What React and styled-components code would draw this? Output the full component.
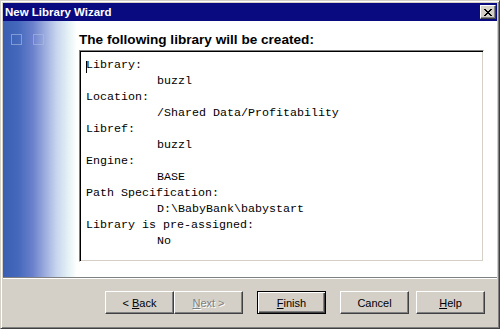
import React from "react";
import styled, { createGlobalStyle } from "styled-components";

const Global = createGlobalStyle`
  html, body { margin: 0; padding: 0; background: #d4d0c8; }
  * { box-sizing: border-box; }
`;

const Frame = styled.div`
  width: 500px;
  height: 329px;
  background: #d4d0c8;
  border-top: 1px solid #d4d0c8;
  border-left: 1px solid #d4d0c8;
  border-right: 1px solid #404040;
  border-bottom: 1px solid #404040;
  box-shadow: inset 1px 1px #ffffff, inset -1px -1px #808080;
  padding: 2px;
  display: flex;
  flex-direction: column;
`;

const TitleBar = styled.div`
  height: 18px;
  background: #0a0a80;
  display: flex;
  align-items: center;
  justify-content: space-between;
  padding: 0 1px 0 2px;
`;

const Title = styled.span`
  font-family: "Liberation Sans", Arial, sans-serif;
  font-weight: bold;
  font-size: 11.5px;
  color: #ffffff;
  line-height: 18px;
`;

const CloseButton = styled.div`
  width: 16px;
  height: 14px;
  background: #d4d0c8;
  border-top: 1px solid #ffffff;
  border-left: 1px solid #ffffff;
  border-right: 1px solid #404040;
  border-bottom: 1px solid #404040;
  box-shadow: inset -1px -1px #808080;
  display: flex;
  align-items: center;
  justify-content: center;
`;

const Body = styled.div`
  height: 256px;
  background: #ffffff;
  display: flex;
`;

const SidePanel = styled.div`
  width: 74px;
  flex: none;
  background: linear-gradient(
    to right,
    #3a5fb2 0%,
    #4468bb 20%,
    #6a80cc 40%,
    #9aaadc 56%,
    #c6d4ee 72%,
    #e4f1f5 88%,
    #ffffff 100%
  );
  display: flex;
  align-items: flex-start;
  gap: 11px;
  padding: 13px 0 0 8px;
`;

const Square = styled.div`
  width: 11px;
  height: 11px;
  border: 1px solid rgba(170, 188, 228, 0.6);
`;

const Content = styled.div`
  flex: 1;
  padding: 11px 12px 0 2px;
  display: flex;
  flex-direction: column;
  gap: 2px;
`;

const Heading = styled.div`
  font-family: "Liberation Sans", Arial, sans-serif;
  font-weight: bold;
  font-size: 13.6px;
  line-height: 16px;
  color: #000;
`;

const TextBox = styled.div`
  position: relative;
  width: 405px;
  height: 212px;
  background: #fff;
  border-top: 1px solid #808080;
  border-left: 1px solid #808080;
  border-right: 1px solid #ffffff;
  border-bottom: 1px solid #ffffff;
  box-shadow: inset 1px 1px #000000, inset -1px -1px #d4d0c8;
  padding: 6px 0 0 6px;
  font-family: "Liberation Mono", "Courier New", monospace;
  font-size: 11.67px;
  line-height: 16px;
  color: #000;
`;

const Caret = styled.span`
  position: absolute;
  left: 6px;
  top: 10px;
  width: 1px;
  height: 12px;
  background: #000;
`;

const Line = styled.div`
  white-space: pre;
  padding-left: ${(p) => (p.$indent ? "71px" : "0")};
`;

const Separator = styled.div`
  height: 2px;
  border-top: 1px solid #808080;
  border-bottom: 1px solid #ffffff;
`;

const ButtonBar = styled.div`
  flex: 1;
  display: flex;
  justify-content: flex-end;
  align-items: flex-start;
  padding: 12px 12px 0 0;
`;

const Button = styled.div`
  width: 69px;
  height: 23px;
  margin-left: ${(p) => p.$gap || 0}px;
  background: #d4d0c8;
  border-top: 1px solid ${(p) => (p.$default ? "#000" : "#ffffff")};
  border-left: 1px solid ${(p) => (p.$default ? "#000" : "#ffffff")};
  border-right: 1px solid ${(p) => (p.$default ? "#000" : "#404040")};
  border-bottom: 1px solid ${(p) => (p.$default ? "#000" : "#404040")};
  box-shadow: ${(p) =>
    p.$default
      ? "inset 1px 1px #ffffff, inset -1px -1px #404040, inset -2px -2px #808080"
      : "inset -1px -1px #808080"};
  display: flex;
  align-items: center;
  justify-content: center;
  font-family: "Liberation Sans", Arial, sans-serif;
  font-size: 11px;
  color: ${(p) => (p.$disabled ? "#808080" : "#000")};
  text-shadow: ${(p) => (p.$disabled ? "1px 1px #ffffff" : "none")};
  u { text-underline-offset: 1px; }
`;

const rows = [
  ["Library:", "buzzl"],
  ["Location:", "/Shared Data/Profitability"],
  ["Libref:", "buzzl"],
  ["Engine:", "BASE"],
  ["Path Specification:", "D:\\BabyBank\\babystart"],
  ["Library is pre-assigned:", "No"],
];

export default function App() {
  return (
    <>
      <Global />
      <Frame>
        <TitleBar>
          <Title>New Library Wizard</Title>
          <CloseButton>
            <svg width="8" height="7" viewBox="0 0 8 7" shapeRendering="crispEdges">
              <path
                d="M0 0h2v1H0zM1 1h2v1H1zM2 2h1v1H2zM3 3h2v1H3zM2 4h1v1H2zM1 5h2v1H1zM0 6h2v1H0zM6 0h2v1H6zM5 1h2v1H5zM5 2h1v1H5zM5 4h1v1H5zM5 5h2v1H5zM6 6h2v1H6zM3 2h2v1H3zM3 4h2v1H3z"
                fill="#000"
              />
            </svg>
          </CloseButton>
        </TitleBar>
        <Body>
          <SidePanel>
            <Square />
            <Square />
          </SidePanel>
          <Content>
            <Heading>The following library will be created:</Heading>
            <TextBox>
              <Caret />
              {rows.map(([label, value]) => (
                <React.Fragment key={label}>
                  <Line>{label}</Line>
                  <Line $indent>{value}</Line>
                </React.Fragment>
              ))}
            </TextBox>
          </Content>
        </Body>
        <Separator />
        <ButtonBar>
          <Button>
            &lt;&nbsp;<u>B</u>ack
          </Button>
          <Button $disabled>
            <u>N</u>ext &gt;
          </Button>
          <Button $default $gap={14}>
            <u>F</u>inish
          </Button>
          <Button $gap={14}>Cancel</Button>
          <Button $gap={7}>
            <u>H</u>elp
          </Button>
        </ButtonBar>
      </Frame>
    </>
  );
}
